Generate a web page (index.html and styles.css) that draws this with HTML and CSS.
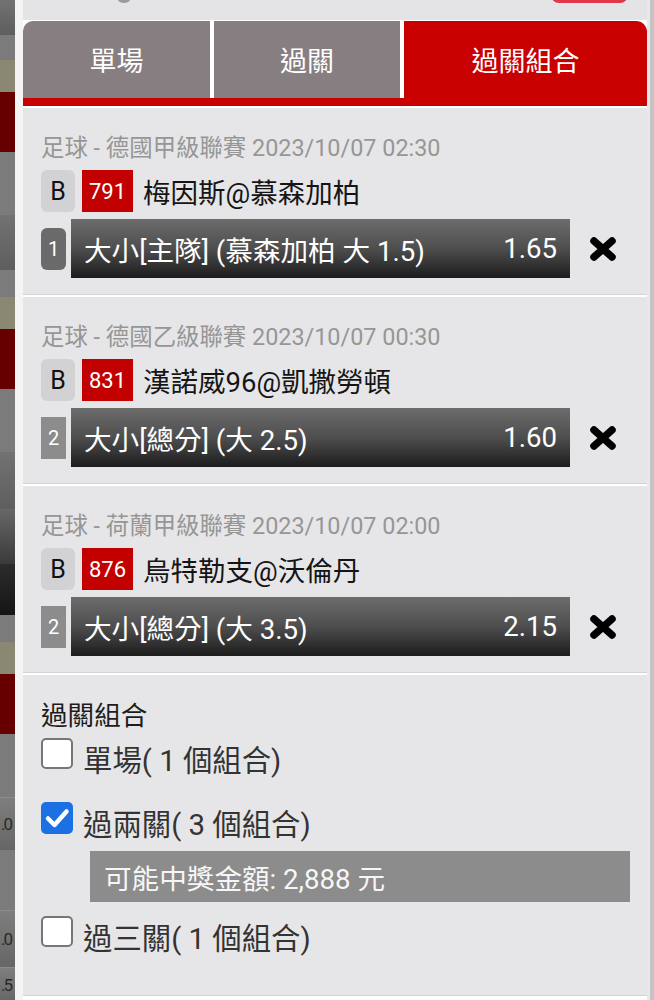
FILE: index.html
```html
<!DOCTYPE html>
<html lang="zh-Hant">
<head>
  <meta charset="UTF-8">
  <title>過關組合</title>
  <link rel="stylesheet" href="styles.css">
</head>
<body>
  <div class="backdrop">
    <div class="bk g1"></div>
    <div class="bk g2" style="height:25px"></div>
    <div class="bk khaki"></div>
    <div class="bk wine"></div>
    <div class="bk g2" style="height:63px"></div>
    <div class="bk g1" style="height:55px"></div>
    <div class="bk g2" style="height:27px"></div>
    <div class="bk khaki"></div>
    <div class="bk wine"></div>
    <div class="bk g2" style="height:63px"></div>
    <div class="bk g1" style="height:57px"></div>
    <div class="bk fade" style="height:55px"></div>
    <div class="bk dark" style="height:51px"></div>
    <div class="bk g2" style="height:27px"></div>
    <div class="bk khaki"></div>
    <div class="bk wine"></div>
    <div class="bk g2" style="height:63px"></div>
    <div class="bk num" style="height:53px"><span>.0</span></div>
    <div class="bk g2" style="height:60px"></div>
    <div class="bk num" style="height:57px"><span>.0</span></div>
    <div class="bk num" style="height:35px"><span>.5</span></div>
  </div>
  <div class="gutter"></div>

  <div class="sheet">
    <div class="top-bar">
      <span class="dot"></span>
      <span class="pill"></span>
    </div>

    <div class="tabs">
      <div class="tab first">單場</div>
      <div class="tab">過關</div>
      <div class="tab active">過關組合</div>
    </div>
    <div class="tab-line"></div>

    <div class="match">
      <div class="league">足球 - 德國甲級聯賽 2023/10/07 02:30</div>
      <div class="teams">
        <span class="mark">B</span>
        <span class="code">791</span>
        <span class="names">梅因斯@慕森加柏</span>
      </div>
      <div class="bet">
        <span class="leg leg-dark">1</span>
        <div class="bet-bar">
          <span>大小[主隊] (慕森加柏 大 1.5)</span>
          <span>1.65</span>
        </div>
        <svg class="remove" viewBox="0 0 28 26" width="28" height="26">
          <path d="M5 5 L23 21 M23 5 L5 21" stroke="#000" stroke-width="7.5" stroke-linecap="round"/>
        </svg>
      </div>
    </div>

    <div class="match">
      <div class="league">足球 - 德國乙級聯賽 2023/10/07 00:30</div>
      <div class="teams">
        <span class="mark">B</span>
        <span class="code">831</span>
        <span class="names">漢諾威96@凱撒勞頓</span>
      </div>
      <div class="bet">
        <span class="leg">2</span>
        <div class="bet-bar">
          <span>大小[總分] (大 2.5)</span>
          <span>1.60</span>
        </div>
        <svg class="remove" viewBox="0 0 28 26" width="28" height="26">
          <path d="M5 5 L23 21 M23 5 L5 21" stroke="#000" stroke-width="7.5" stroke-linecap="round"/>
        </svg>
      </div>
    </div>

    <div class="match">
      <div class="league">足球 - 荷蘭甲級聯賽 2023/10/07 02:00</div>
      <div class="teams">
        <span class="mark">B</span>
        <span class="code">876</span>
        <span class="names">烏特勒支@沃倫丹</span>
      </div>
      <div class="bet">
        <span class="leg">2</span>
        <div class="bet-bar">
          <span>大小[總分] (大 3.5)</span>
          <span>2.15</span>
        </div>
        <svg class="remove" viewBox="0 0 28 26" width="28" height="26">
          <path d="M5 5 L23 21 M23 5 L5 21" stroke="#000" stroke-width="7.5" stroke-linecap="round"/>
        </svg>
      </div>
    </div>

    <div class="combo">
      <div class="combo-title">過關組合</div>

      <label class="check-row">
        <span class="box"></span>
        <span class="check-text">單場( 1 個組合)</span>
      </label>

      <label class="check-row">
        <span class="box checked">
          <svg viewBox="0 0 32 32" width="32" height="32">
            <path d="M7 16.5 L13.5 23 L25.5 9.5" fill="none" stroke="#fff" stroke-width="4.5" stroke-linecap="round" stroke-linejoin="round"/>
          </svg>
        </span>
        <span class="check-text">過兩關( 3 個組合)</span>
      </label>

      <div class="payout">可能中獎金額: 2,888 元</div>

      <label class="check-row last">
        <span class="box"></span>
        <span class="check-text">過三關( 1 個組合)</span>
      </label>
    </div>
  </div>

  <div class="rail"></div>
</body>
</html>
```

FILE: styles.css
```css
body {
  margin: 0;
  height: 1000px;
  overflow: hidden;
  display: flex;
  font-family: Roboto, "Noto Sans CJK TC", sans-serif;
  background: #fff;
}

/* page behind the slip */
.backdrop {
  width: 15px;
  display: flex;
  flex-direction: column;
}

.bk {
  flex: none;
  overflow: hidden;
}

.g1 {
  height: 35px;
  background: linear-gradient(#727272, #5e5e5e);
}

.g2 {
  background: #7b7b7b;
}

.khaki {
  height: 32px;
  background: #8a8772;
}

.wine {
  height: 60px;
  background: #660000;
}

.fade {
  background: linear-gradient(#676767, #3a3a3a);
}

.dark {
  background: linear-gradient(#2c2c2c, #151515);
}

.num {
  background: linear-gradient(#7e7e7e, #666);
  border-top: 1px solid #8c8c8c;
  box-sizing: border-box;
  display: flex;
  align-items: center;
}

.num span {
  margin-left: 1px;
  font-size: 17px;
  letter-spacing: -2px;
  color: #2a2a2a;
  white-space: nowrap;
}

.gutter {
  width: 8px;
  background: #f4f4f4;
}

.rail {
  width: 7px;
  background: linear-gradient(to right, #e8e8e8 3px, #c4c4c4 3px);
}

/* slip */
.sheet {
  width: 624px;
  flex: none;
  background: #fff;
}

.top-bar {
  height: 20px;
  background: #e4e4e6;
  display: flex;
  justify-content: space-between;
  align-items: flex-start;
  padding: 0 19px 0 93px;
  overflow: hidden;
  margin-bottom: 1px;
}

.dot {
  width: 16px;
  height: 16px;
  margin-top: -13px;
  border-radius: 50%;
  background: #9a9a9a;
}

.pill {
  width: 77px;
  height: 30px;
  margin-top: -27px;
  border-radius: 8px;
  background: #e0384a;
}

.tabs {
  display: flex;
  gap: 4px;
}

.tab {
  width: 186px;
  height: 77px;
  display: flex;
  align-items: center;
  justify-content: center;
  background: #877e82;
  color: #fff;
  font-size: 27px;
}

.tab.first {
  width: 187px;
  border-top-left-radius: 10px;
}

.tab.active {
  flex: 1;
  background: #c80000;
  border-top-right-radius: 11px;
}

.tab-line {
  height: 8px;
  background: #c80000;
  margin-bottom: 2px;
}

.match {
  background: #e6e6e8;
  padding: 25px 17px 16px 18px;
  border-bottom: 1px solid #d4d4d6;
  margin-bottom: 2px;
}

.league {
  height: 30px;
  line-height: 30px;
  font-size: 23.4px;
  color: #969696;
  white-space: nowrap;
}

.teams {
  display: flex;
  align-items: center;
  height: 42px;
  margin-top: 7px;
}

.mark {
  width: 34px;
  height: 42px;
  border-radius: 6px;
  background: #d2d2d4;
  display: flex;
  align-items: center;
  justify-content: center;
  font-size: 25px;
  color: #111;
}

.code {
  width: 51px;
  height: 42px;
  margin-left: 7px;
  background: #c20000;
  color: #fff;
  font-size: 22px;
  display: flex;
  align-items: center;
  justify-content: center;
}

.names {
  margin-left: 10px;
  font-size: 27.5px;
  color: #151515;
  white-space: nowrap;
}

.bet {
  display: flex;
  align-items: center;
  margin-top: 7px;
  height: 59px;
}

.leg {
  width: 25px;
  height: 42px;
  background: #8c8c8c;
  color: #fff;
  font-size: 20px;
  display: flex;
  align-items: center;
  justify-content: center;
}

.leg-dark {
  background: #6a6a6a;
  border-radius: 6px;
}

.bet-bar {
  width: 499px;
  height: 59px;
  margin-left: 5px;
  box-sizing: border-box;
  padding: 0 13px;
  display: flex;
  align-items: center;
  justify-content: space-between;
  background: linear-gradient(#6c6c6c, #4e4e4e 50%, #1c1c1c);
  color: #fff;
  font-size: 27.6px;
  white-space: nowrap;
}

.remove {
  margin-left: 19px;
}

/* combination options */
.combo {
  background: #e6e6e8;
  padding: 25px 17px 38px 18px;
  border-bottom: 1px solid #d4d4d6;
}

.combo-title {
  line-height: 32px;
  font-size: 26.6px;
  color: #1c1c1c;
  margin-bottom: 6px;
}

.check-row {
  display: flex;
  align-items: flex-start;
  height: 41px;
  margin-bottom: 23px;
}

.check-row.last {
  margin-bottom: 0;
}

.box {
  width: 32px;
  height: 31px;
  box-sizing: border-box;
  border: 2px solid #767676;
  border-radius: 5px;
  background: #fff;
  flex: none;
}

.box.checked {
  border: none;
  background: #1b70e4;
  height: 32px;
}

.box svg {
  display: block;
}

.check-text {
  margin: 5px 0 0 10px;
  line-height: 36px;
  font-size: 29.4px;
  color: #333;
  white-space: nowrap;
}

.payout {
  margin: -15px 0 14px 49px;
  height: 51px;
  box-sizing: border-box;
  padding-left: 14px;
  display: flex;
  align-items: center;
  background: #8c8c8c;
  color: #f6f6f6;
  font-size: 27.6px;
}
```
